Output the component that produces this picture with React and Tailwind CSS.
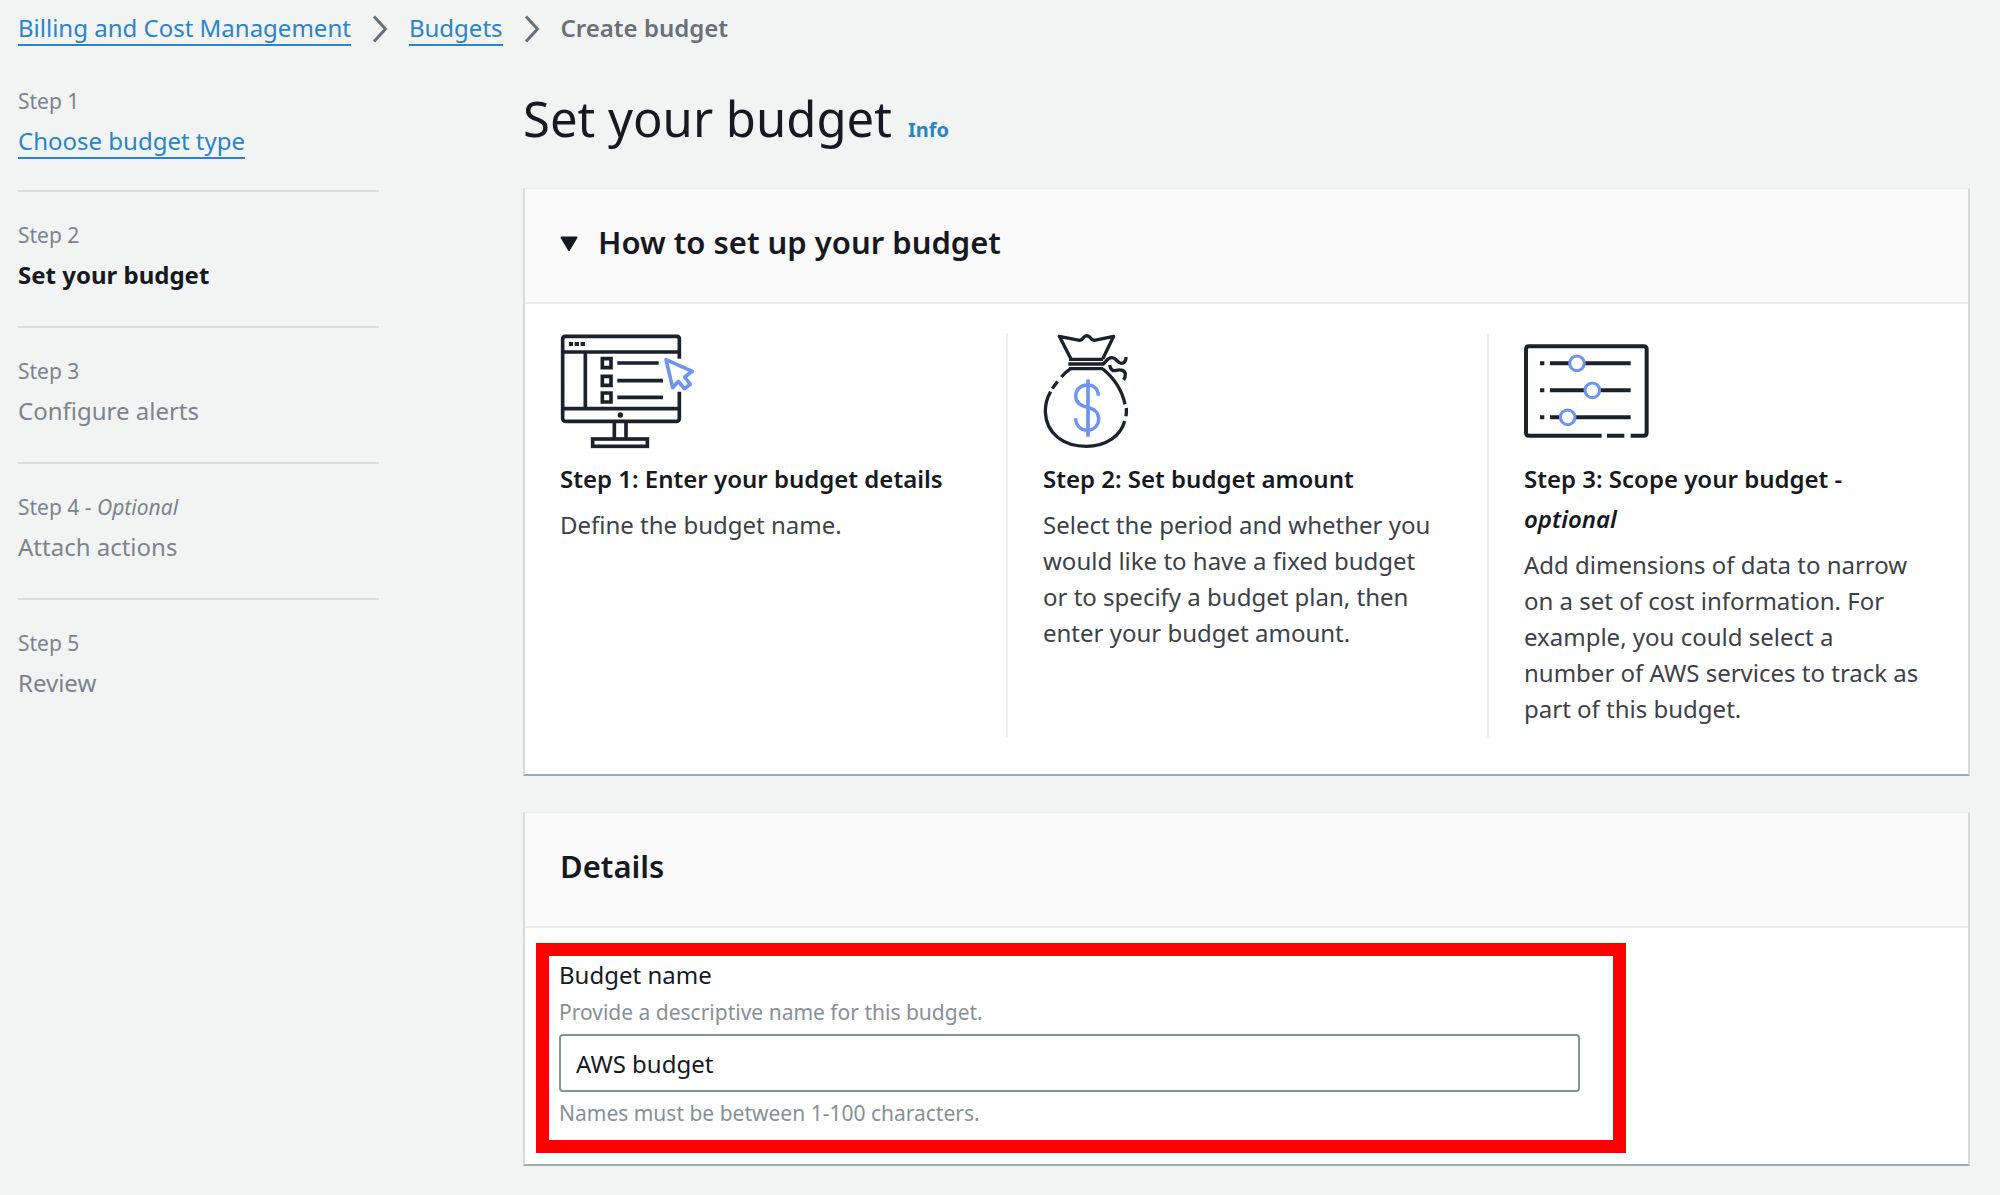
import React, { useState } from 'react';

const steps = [
  { label: 'Step 1', title: 'Choose budget type', state: 'done' },
  { label: 'Step 2', title: 'Set your budget', state: 'current' },
  { label: 'Step 3', title: 'Configure alerts', state: 'todo' },
  { label: 'Step 4', title: 'Attach actions', state: 'todo', optional: true },
  { label: 'Step 5', title: 'Review', state: 'todo' },
];

const guide = [
  {
    icon: MonitorIcon,
    title: 'Step 1: Enter your budget details',
    text: 'Define the budget name.',
  },
  {
    icon: MoneyBagIcon,
    title: 'Step 2: Set budget amount',
    text: 'Select the period and whether you would like to have a fixed budget or to specify a budget plan, then enter your budget amount.',
  },
  {
    icon: SlidersIcon,
    title: 'Step 3: Scope your budget -',
    optional: true,
    text: 'Add dimensions of data to narrow on a set of cost information. For example, you could select a number of AWS services to track as part of this budget.',
  },
];

function App() {
  return (
    <div className="min-h-screen bg-[#f2f4f3] pb-7 font-['Noto_Sans',sans-serif] text-[24px] leading-9 text-[#16191f]">
      <Breadcrumbs />
      <div className="flex gap-36 pl-[18px] pr-[30px]">
        <Steps />
        <main className="min-w-0 flex-1 pt-10">
          <div className="flex items-baseline gap-4">
            <h1 className="text-[49px] leading-[64px]">Set your budget</h1>
            <a href="#info" className="text-[20px] font-bold text-[#2a84c8]">Info</a>
          </div>
          <HowTo />
          <Details />
        </main>
      </div>
    </div>
  );
}

function Breadcrumbs() {
  return (
    <nav aria-label="Breadcrumbs" className="flex items-center gap-[21px] px-[18px] pt-3">
      <a href="#billing" className="border-b-2 border-[#2a84c8] leading-8 text-[#2a84c8]">Billing and Cost Management</a>
      <Chevron />
      <a href="#budgets" className="border-b-2 border-[#2a84c8] leading-8 text-[#2a84c8]">Budgets</a>
      <Chevron />
      <span className="border-b-2 border-transparent font-semibold leading-8 text-[#687078]">Create budget</span>
    </nav>
  );
}

function Chevron() {
  return (
    <svg width="16" height="28" viewBox="0 0 16 28" fill="none" stroke="#687078" strokeWidth="3" aria-hidden="true">
      <path d="M2 1.5 L13.5 14 L2 26.5" />
    </svg>
  );
}

function Steps() {
  return (
    <ol className="w-[361px] shrink-0 divide-y-2 divide-[#d9dedd] pt-[35px]">
      {steps.map((step) => (
        <li key={step.label} className="h-[136px] pt-[23px] first:h-[111px] first:pt-0">
          <div className="pb-[2px] text-[21px] leading-10 text-[#7b848c]">
            {step.label}
            {step.optional && <> - <em>Optional</em></>}
          </div>
          {step.state === 'done' && (
            <a href="#type" className="inline-block border-b-2 border-[#2a84c8] leading-8 text-[#2a84c8]">{step.title}</a>
          )}
          {step.state === 'current' && <div className="font-bold" aria-current="step">{step.title}</div>}
          {step.state === 'todo' && <div className="text-[#7b848c]">{step.title}</div>}
        </li>
      ))}
    </ol>
  );
}

function Card({ header, children, className }) {
  return (
    <section className={`border-x-2 border-b-2 border-t border-x-[#d5dadc] border-b-[#a2a9ae] border-t-[#eaeded] bg-white ${className}`}>
      <div className="flex h-[115px] items-center border-b-2 border-[#eaeded] bg-[#fafafa] px-[35px] pb-2">
        {header}
      </div>
      {children}
    </section>
  );
}

function HowTo() {
  const [open, setOpen] = useState(true);
  return (
    <Card
      className="mt-[38px]"
      header={
        <h2 className="text-[31px] font-semibold">
          <button type="button" aria-expanded={open} onClick={() => setOpen(!open)} className="flex items-center gap-5">
            <svg width="18" height="16" viewBox="0 0 18 16" className={open ? 'mt-1' : 'mt-1 -rotate-90'} aria-hidden="true">
              <path d="M1.5 1.5 H16.5 L9 14 Z" fill="#16191f" stroke="#16191f" strokeWidth="2" strokeLinejoin="round" />
            </svg>
            How to set up your budget
          </button>
        </h2>
      }
    >
      {open && (
        <div className="grid grid-cols-3 pb-[37px] pt-[29px]">
          {guide.map(({ icon: Icon, title, optional, text }) => (
            <div key={title} className="border-l-2 border-[#eaeded] pl-[35px] pr-11 first:border-l-0">
              <Icon />
              <h3 className="mt-[10px] font-semibold leading-10">
                {title}
                {optional && <em className="block">optional</em>}
              </h3>
              <p className="mt-2 pb-[10px] text-[#3c4148]">{text}</p>
            </div>
          ))}
        </div>
      )}
    </Card>
  );
}

function Details() {
  const [name, setName] = useState('AWS budget');
  return (
    <Card className="mt-9" header={<h2 className="text-[31px] font-semibold">Details</h2>}>
      <div className="px-[11px] pb-[11px] pt-[15px]">
        <div className="w-[1090px] max-w-full border-[13px] border-[#ff0000] pb-[9px] pl-[10px] pr-[33px]">
          <label htmlFor="budget-name" className="block leading-[38px]">Budget name</label>
          <p id="budget-desc" className="pb-1 text-[21px] text-[#879096]">Provide a descriptive name for this budget.</p>
          <input
            id="budget-name"
            type="text"
            value={name}
            maxLength={100}
            aria-describedby="budget-desc budget-hint"
            onChange={(e) => setName(e.target.value)}
            className="block h-[58px] w-full rounded-sm border-2 border-[#879096] bg-white px-[15px]"
          />
          <p id="budget-hint" className="pt-[3px] text-[21px] text-[#879096]">Names must be between 1-100 characters.</p>
        </div>
      </div>
    </Card>
  );
}

// Illustrations, dark strokes with a blue accent
function MonitorIcon() {
  return (
    <svg width="136" height="116" viewBox="60 36 408 348" fill="none" stroke="#1d212b" strokeWidth="11" aria-hidden="true">
      <path d="M418 113 V54 Q418 46 410 46 H76 Q68 46 68 54 V292 Q68 301 76 301 H410 Q418 301 418 292 V212" />
      <path d="M68 93 H418 M136 93 V263 M68 263 H418" />
      <path d="M87 69 H99 M104 69 H117 M122 69 H135" strokeWidth="12" />
      <path d="M232 126 H356 M232 179 H369 M232 229 H369" />
      <path d="M187 113 H213 V140 H187 Z M187 166 H213 V193 H187 Z M187 216 H213 V243 H187 Z" />
      <circle cx="241" cy="282" r="8" fill="#1d212b" stroke="none" />
      <path d="M223 301 V353 M258 301 V353" />
      <rect x="158" y="354" width="164" height="22" />
      <path d="M378 116 L398 200 L415 181 L433 203 L451 190 L434 168 L457 151 Z" stroke="#6f94ee" strokeWidth="11" strokeLinejoin="round" />
    </svg>
  );
}

function MoneyBagIcon() {
  return (
    <svg width="88" height="116" viewBox="66 36 264 348" fill="none" stroke="#1d212b" strokeWidth="10" aria-hidden="true">
      <path d="M150 114 L115 46 L176 58 Q184 56 188 49 Q197 40 207 49 Q211 56 220 58 L278 46 L245 114" strokeLinejoin="round" />
      <path d="M144 115 H246 M142 129 H250 M144 143 H246" />
      <path d="M246 129 C256 124 258 110 272 110 C288 110 288 128 302 127 C313 126 315 118 315 108" />
      <path d="M266 132 C268 146 276 151 286 148 C299 144 313 148 313 160 Q313 169 308 177" />
      <path d="M149 143 Q134 153 121 168 M110 182 Q101 192 94 203 M89 212 C76 234 73 250 73 272 C75 340 130 376 196 376 C254 376 299 346 311 300 M315 286 Q317 274 316 261 M312 250 C304 210 280 172 245 143" />
      <path d="M201 175 V347" stroke="#6f94ee" strokeWidth="11" />
      <path d="M232 224 C232 204 218 192 199 192 C180 192 164 205 164 225 C164 245 181 255 199 259 C218 263 233 274 233 294 C233 314 218 328 199 328 C180 328 164 314 164 292" stroke="#6f94ee" strokeWidth="10" />
    </svg>
  );
}

function SlidersIcon() {
  return (
    <svg width="136" height="116" viewBox="75 36 408 348" fill="none" stroke="#1d212b" strokeWidth="12" aria-hidden="true">
      <path d="M308 344 H90 Q81 344 81 335 V85 Q81 76 90 76 H434 Q443 76 443 85 V335 Q443 344 434 344 H395 M324 344 H376" />
      <path d="M123 127 H136 M153 127 H395 M123 208 H136 M153 208 H395 M123 289 H136 M153 289 H395" />
      <g fill="#fff" stroke="#6f94ee" strokeWidth="9">
        <circle cx="234" cy="127" r="22" />
        <circle cx="280" cy="208" r="22" />
        <circle cx="206" cy="289" r="22" />
      </g>
    </svg>
  );
}

export default App;
